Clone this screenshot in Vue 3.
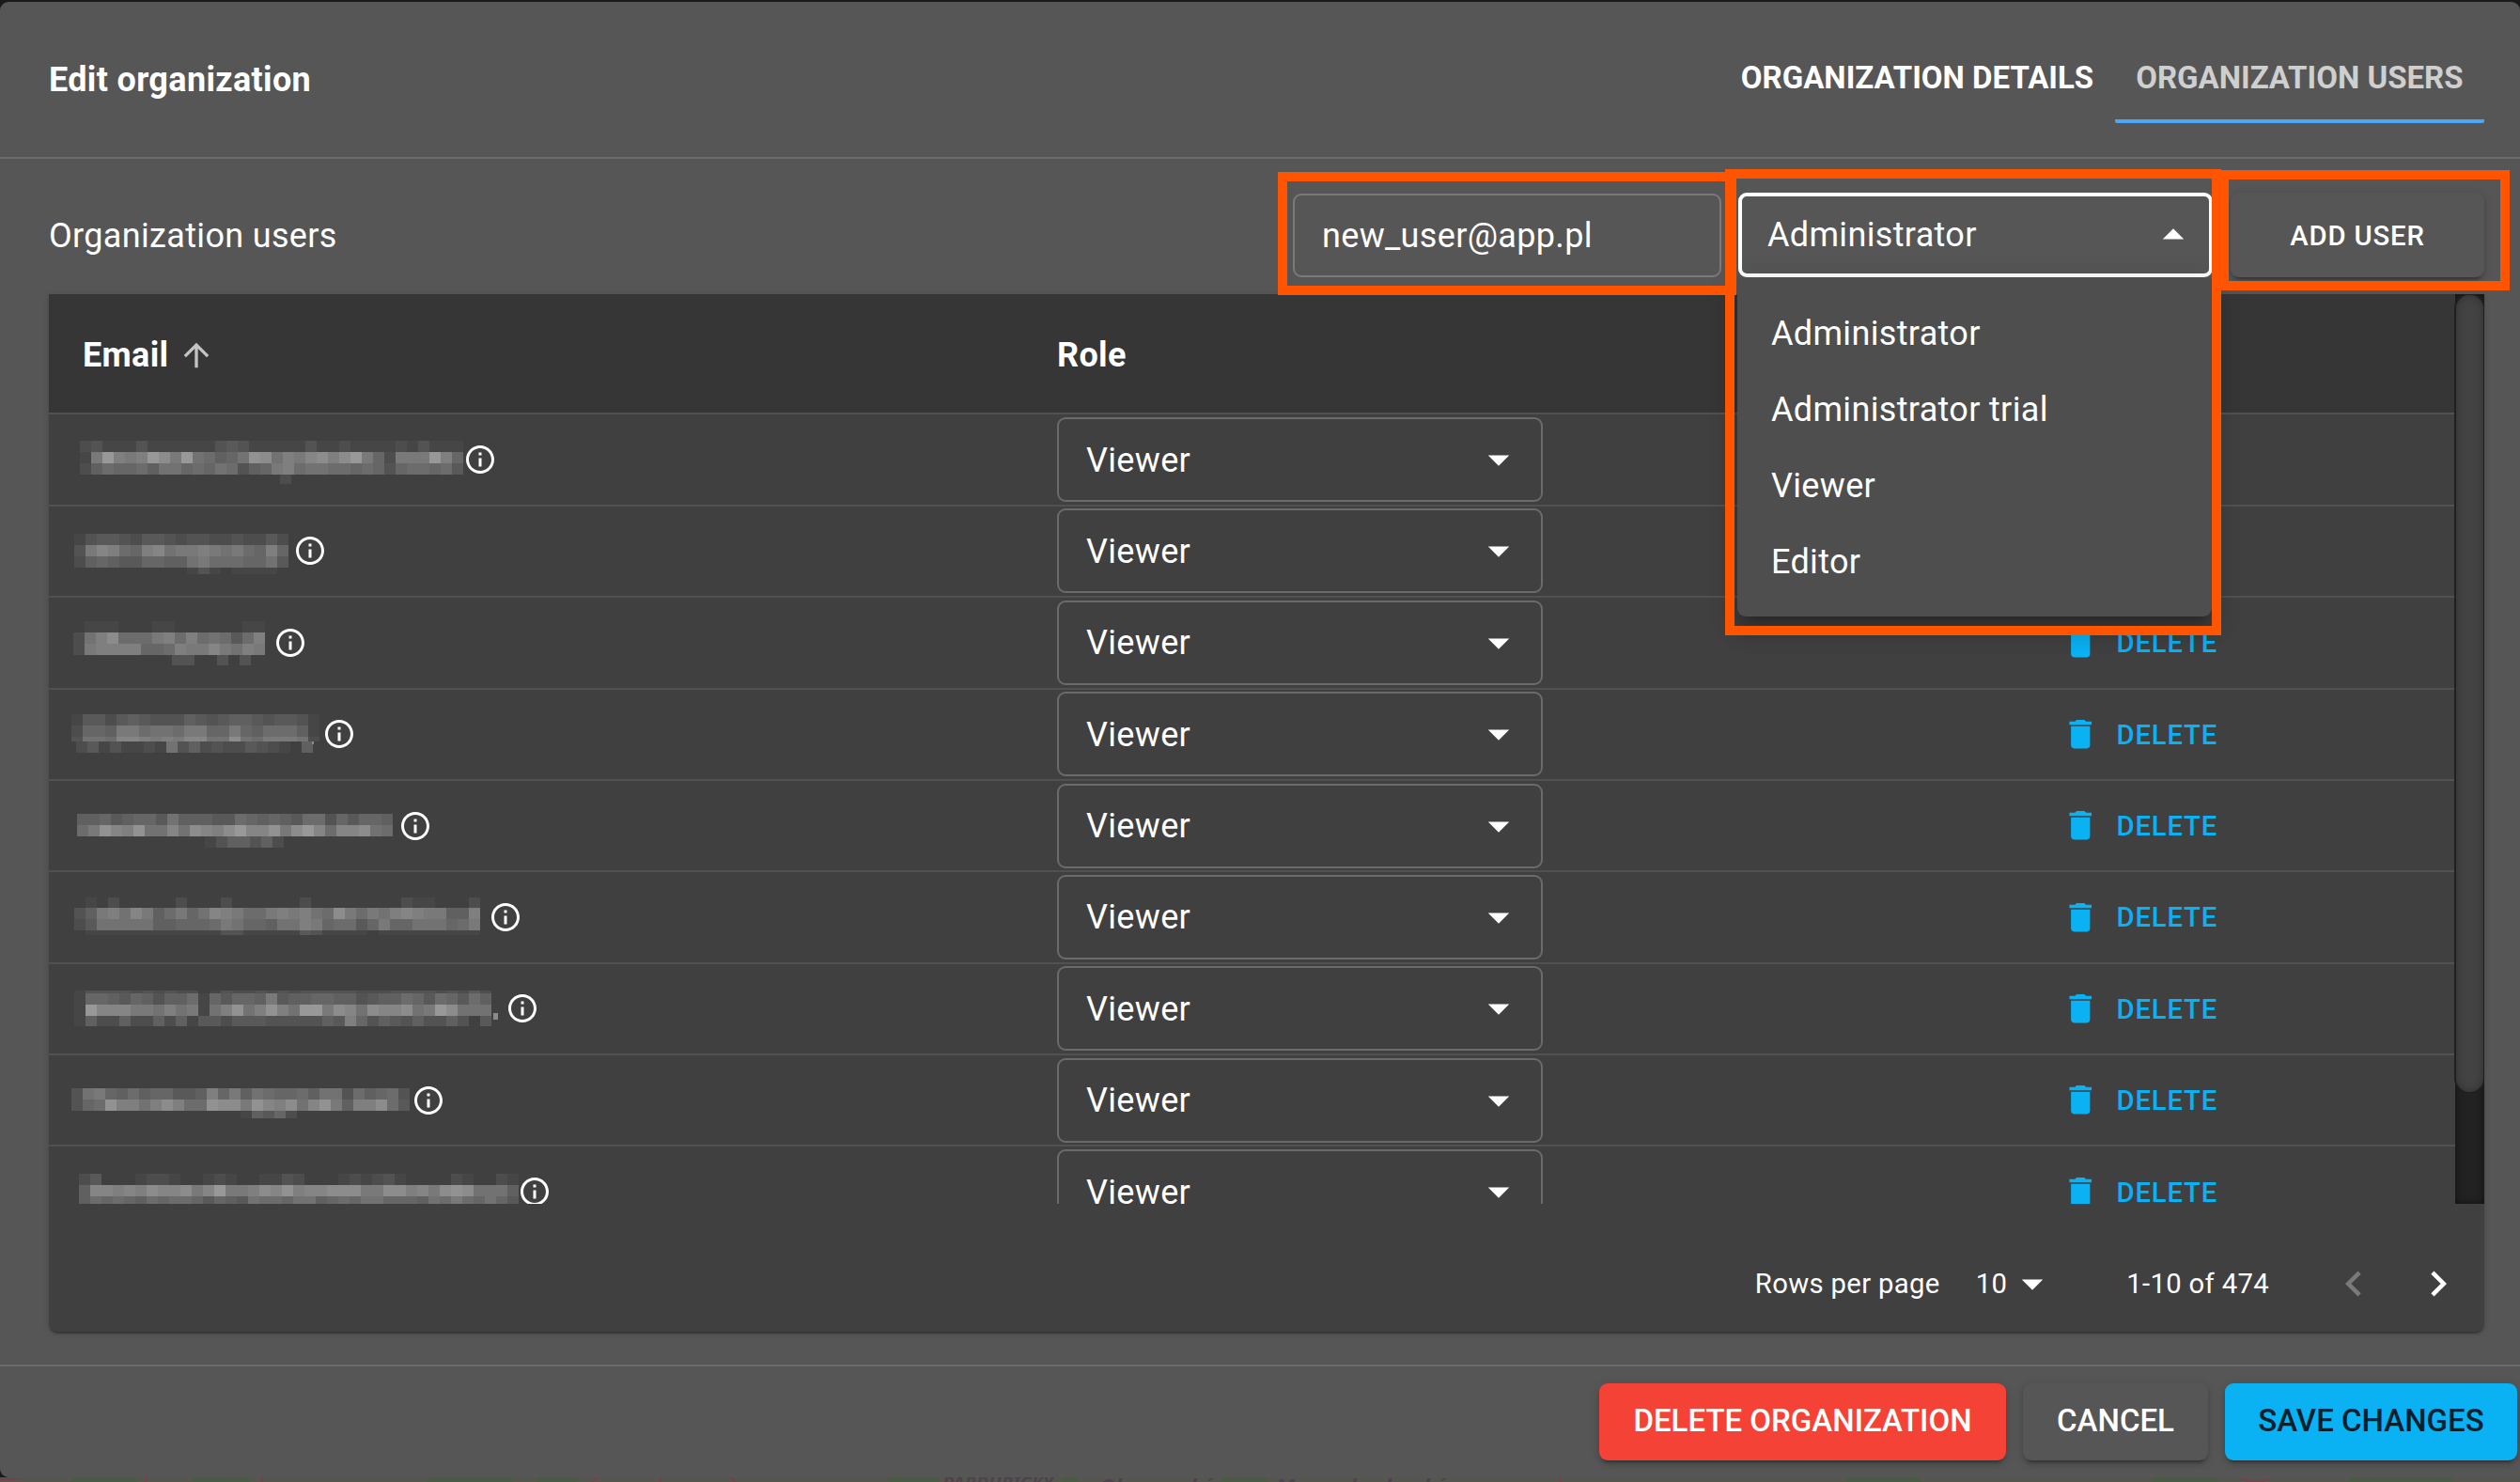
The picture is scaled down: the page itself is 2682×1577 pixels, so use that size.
<template>
  <div class="backdrop">
    <div class="dialog">
      <header class="dialog-header">
        <h2>Edit organization</h2>
        <nav class="tabs">
          <button class="tab">Organization details</button>
          <button class="tab active">Organization users</button>
        </nav>
      </header>

      <main class="content">
        <div class="toolbar">
          <span class="subtitle">Organization users</span>
          <div class="field">{{ newEmail }}</div>
          <div class="role-select">
            <span>Administrator</span>
            <svg class="caret" viewBox="0 0 24 24"><path d="M7 14l5-5 5 5z" /></svg>
            <ul class="menu">
              <li v-for="role in roles" :key="role">{{ role }}</li>
            </ul>
          </div>
          <button class="btn add">Add user</button>
          <i class="mark mark-email"></i>
          <i class="mark mark-role"></i>
          <i class="mark mark-add"></i>
        </div>

        <section class="card">
          <div class="scroller">
            <div class="table">
              <div class="row head">
                <div class="email">
                  Email
                  <svg class="sort" viewBox="0 0 24 24"><path d="M4 12l1.41 1.41L11 7.83V20h2V7.83l5.58 5.59L20 12l-8-8-8 8z" /></svg>
                </div>
                <div class="role">Role</div>
              </div>
              <div v-for="(user, i) in users" :key="i" class="row">
                <div class="email">
                  <!-- masked address -->
                  <svg class="mask" :style="{ width: user.width + 'px' }" shape-rendering="crispEdges">
                    <rect v-for="(c, k) in cells(user)" :key="k" :x="c.x" :y="c.y" :width="c.w" :height="c.h" :fill="c.fill" />
                  </svg>
                  <svg class="info" viewBox="0 0 24 24"><path d="M11 7h2v2h-2zm0 4h2v6h-2zm1-9C6.48 2 2 6.48 2 12s4.48 10 10 10 10-4.48 10-10S17.52 2 12 2zm0 18c-4.41 0-8-3.59-8-8s3.59-8 8-8 8 3.59 8 8-3.59 8-8 8z" /></svg>
                </div>
                <div class="role">
                  <div class="select">
                    <span>Viewer</span>
                    <svg class="caret" viewBox="0 0 24 24"><path d="M7 10l5 5 5-5z" /></svg>
                  </div>
                </div>
                <div class="action">
                  <svg class="trash" viewBox="0 0 24 24"><path d="M6 19c0 1.1.9 2 2 2h8c1.1 0 2-.9 2-2V7H6v12zM19 4h-3.5l-1-1h-5l-1 1H5v2h14V4z" /></svg>
                  <span>Delete</span>
                </div>
              </div>
            </div>
            <div class="track"><div class="thumb"></div></div>
          </div>
          <div class="pagination">
            <span class="per-page">Rows per page</span>
            <span class="count">10</span>
            <svg class="caret" viewBox="0 0 24 24"><path d="M7 10l5 5 5-5z" /></svg>
            <span class="range">1-10 of 474</span>
            <svg class="chev off" viewBox="0 0 24 24"><path d="M15.41 16.59L10.83 12l4.58-4.59L14 6l-6 6 6 6z" /></svg>
            <svg class="chev" viewBox="0 0 24 24"><path d="M8.59 16.59L13.17 12 8.59 7.41 10 6l6 6-6 6z" /></svg>
          </div>
        </section>
      </main>

      <footer class="dialog-footer">
        <button class="btn danger">Delete organization</button>
        <button class="btn cancel">Cancel</button>
        <button class="btn primary">Save changes</button>
      </footer>
    </div>
    <!-- sliver of the map under the dialog -->
    <svg class="map" viewBox="0 0 2682 5">
      <rect width="2682" height="5" fill="#55564f" />
      <g fill="#4b5a45">
        <rect x="75" width="70" height="5" />
        <rect x="205" width="60" height="5" />
        <rect x="455" width="90" height="5" />
        <rect x="570" width="45" height="5" />
        <rect x="945" width="55" height="5" />
        <rect x="1130" width="18" height="5" />
        <rect x="1300" width="50" height="5" />
        <rect x="1965" width="80" height="5" />
        <rect x="2290" width="70" height="5" />
        <rect x="2500" width="110" height="5" />
      </g>
      <path d="M0 2h22M155 0v5M279 0v5M637 0l-8 5M703 0v5M777 0l6 5M1661 0v5M2385 2q15 5 30 0" stroke="#76404d" stroke-width="2" fill="none" />
      <g class="map-label">
        <text x="1003" y="14" textLength="118" lengthAdjust="spacingAndGlyphs">PARDUBICKÝ</text>
        <text x="1170" y="17" textLength="122" lengthAdjust="spacingAndGlyphs">Olomoucký</text>
        <text x="1358" y="17" textLength="182" lengthAdjust="spacingAndGlyphs">Moravskoslezský</text>
      </g>
    </svg>
  </div>
</template>

<script setup>
const newEmail = 'new_user@app.pl'
const roles = ['Administrator', 'Administrator trial', 'Viewer', 'Editor']

// lines: [height, brightness per 12px cell (hex), optional x shift]
const users = [
  { width: 403, x: -5, y: 27, lines: [
    [12, '2311131111113431111131121111213111'],
    [12, '19ea9aec9e87568dc8a9bcace962999ea6'],
    [12, '257667588676873569a788776763677674'],
    [10, '0000000000000000002000000000000000', -3],
  ] },
  { width: 222, x: -11, y: 29, lines: [
    [12, '1344324432332232242'],
    [12, '39ba76ab899a98976a6'],
    [12, '2565446655897776684'],
    [7, '0000000000131011110'],
  ] },
  { width: 201, x: -12, y: 25, lines: [
    [12, '011100011000000110'],
    [12, '28ac7779a7a78747a0'],
    [12, '29aaaa667a99b98a90'],
    [11, '000000000330030300', -3],
  ] },
  { width: 253, x: -14, y: 26, lines: [
    [12, '1442454333543455434431'],
    [12, '2665997887996696577751'],
    [5, '3887bba9a9bb88c8799982'],
    [12, '241311218352322432105', 5],
  ], dot: [242, 55, 2, 3] },
  { width: 334, x: -8, y: 35, lines: [
    [12, '5564566485554476565477364665'],
    [12, '79dbad88b8cbacebbd9ceb7bbc87'],
    [12, '0000000000013553520000000000', 4],
  ] },
  { width: 430, x: -11, y: 27, lines: [
    [11, '010200000200020000002000000002110002'],
    [12, '359a8b957968ba9779a9a87c9798aba9955a'],
    [12, '24888885566679866588a967746966888679'],
    [5, '011111111111133111114311110111111111'],
  ] },
  { width: 448, x: -11, y: 28, lines: [
    [3, '1333323232201322323233333222333323242'],
    [12, '1665465355716466594556655345576476475'],
    [12, '1ebbb998a8918ad8ada8ee9cb8cbbc89ec888'],
    [11, '152252252514424443333354a635435335304'],
  ], dot: [435, 52, 5, 7] },
  { width: 348, x: -14, y: 35, lines: [
    [12, '389657566445a69587667588375673'],
    [12, '367daa8aca77dcc9dbac8bd95aac74'],
    [8, '000000000000000154620000000000'],
  ] },
  { width: 461, x: -6, y: 28, lines: [
    [12, '240001221001210011320001212310000210021'],
    [12, '5bbabacbbc9be99acbdabbccc99ccab9cdc8885'],
    [12, '576765767764654877688567688666587976864'],
  ] },
]

function cells(user) {
  const out = []
  let y = user.y
  for (const [h, line, dx = 0] of user.lines) {
    for (let i = 0; i < line.length; i++) {
      const n = parseInt(line[i], 16)
      const v = Math.round(64 + n * 6.3)
      if (n) out.push({ x: user.x + dx + i * 12, y, w: 12, h, fill: `rgb(${v},${v},${v})` })
    }
    y += h
  }
  if (user.dot) {
    const [x, dy, w, h] = user.dot
    out.push({ x, y: dy, w, h, fill: '#8a8a8a' })
  }
  return out
}
</script>

<style>
body {
  background: #1a1a1a;
  overflow: hidden;
}
</style>

<style scoped>
* {
  box-sizing: border-box;
}
.backdrop {
  width: 2682px;
  height: 1577px;
  padding-top: 2px;
  overflow: hidden;
  color: #fff;
  font: 400 36px/54px Roboto, sans-serif;
  letter-spacing: 0.00938em;
}
.dialog {
  height: 1570px;
  display: flex;
  flex-direction: column;
  background: #565656;
  border-radius: 9px 9px 0 9px;
}
svg {
  display: block;
  flex: none;
  fill: currentColor;
}
button {
  border: 0;
  background: none;
  color: inherit;
  font: inherit;
  text-transform: uppercase;
  white-space: nowrap;
}
.dialog-header {
  height: 167px;
  padding: 0 38px 0 52px;
  display: flex;
  align-items: flex-start;
  justify-content: space-between;
  border-bottom: 2px solid #6b6b6b;
}
h2 {
  margin: 56px 0 0;
  font-size: 36px;
  font-weight: 700;
}
.tabs {
  display: flex;
  padding-top: 34px;
}
.tab {
  height: 95px;
  padding: 3px 22.5px 0;
  font-size: 33px;
  font-weight: 700;
  letter-spacing: 0;
  border-bottom: 4px solid transparent;
}
.tab.active {
  color: #cfcfcf;
  border-color: #4ba6f5;
  border-radius: 2px;
}
.content {
  height: 1283px;
  padding: 0 38px 0 52px;
}
.toolbar {
  position: relative;
  height: 144px;
  padding-top: 36px;
  display: flex;
  align-items: flex-start;
}
.subtitle {
  flex: 1;
  margin-top: 19px;
}
.field {
  width: 456px;
  height: 89px;
  margin: 1px 18px 0 0;
  padding: 16px 29px;
  border: 2px solid #7a7a7a;
  border-radius: 9px;
}
.role-select {
  position: relative;
  z-index: 2;
  width: 505px;
  height: 90px;
  margin-right: 19px;
  padding: 0 11px 0 27px;
  display: flex;
  align-items: center;
  justify-content: space-between;
  border: 4px solid #fff;
  border-radius: 9px;
}
.caret {
  width: 54px;
  height: 54px;
}
.menu {
  position: absolute;
  top: 87px;
  left: -5px;
  width: 505px;
  margin: 0;
  padding: 18px 0;
  list-style: none;
  background: #4e4e4e;
  border-radius: 0 0 9px 9px;
  box-shadow: 0 11px 11px -7px rgba(0, 0, 0, 0.2), 0 18px 22px 2px rgba(0, 0, 0, 0.14), 0 7px 31px 4px rgba(0, 0, 0, 0.12);
}
.menu li {
  height: 81px;
  padding: 13.5px 36px;
}
.btn {
  padding: 0 36px;
  font-weight: 500;
  border-radius: 9px;
  background: #565656;
  box-shadow: 0 7px 2px -5px rgba(0, 0, 0, 0.2), 0 4px 4px rgba(0, 0, 0, 0.14), 0 2px 11px rgba(0, 0, 0, 0.12);
}
.add {
  width: 270px;
  height: 90px;
  padding-top: 2px;
  font-size: 29.25px;
  letter-spacing: 0.02857em;
}
.mark {
  position: absolute;
  z-index: 3;
  border: 10px solid #ff5500;
}
.mark-email {
  left: 1308px;
  top: 14px;
  width: 488px;
  height: 131px;
}
.mark-role {
  left: 1784px;
  top: 11px;
  width: 528px;
  height: 496px;
}
.mark-add {
  left: 2310px;
  top: 12px;
  width: 309px;
  height: 128px;
}
.card {
  height: 1104px;
  background: #404040;
  border-radius: 0 0 9px 9px;
  box-shadow: 0 4px 2px -2px rgba(0, 0, 0, 0.2), 0 2px 2px rgba(0, 0, 0, 0.14), 0 2px 7px rgba(0, 0, 0, 0.12);
}
.scroller {
  height: 968px;
  display: flex;
  overflow: hidden;
}
.table {
  width: 2561px;
}
.row {
  height: 97.375px;
  display: flex;
  align-items: center;
  border-bottom: 2px solid #515151;
}
.head {
  height: 128.4px;
  padding-top: 3px;
  background: #363636;
  font-weight: 700;
}
.email {
  width: 1073px;
  padding-left: 38px;
  display: flex;
  align-items: center;
}
.head .email {
  padding-left: 36px;
}
.sort {
  width: 40px;
  height: 40px;
  margin-left: 10px;
  color: #c3c3c3;
}
.mask {
  height: 95px;
  overflow: visible;
}
.info {
  width: 36px;
  height: 36px;
}
.role {
  width: 1066px;
}
.select {
  width: 517px;
  height: 90px;
  padding: 0 18px 0 29px;
  display: flex;
  align-items: center;
  justify-content: space-between;
  border: 2px solid #6b6b6b;
  border-radius: 9px;
}
.select span,
.action span {
  padding-top: 1px;
}
.action {
  display: flex;
  align-items: center;
  gap: 18px;
  padding-left: 3px;
  color: #0ab1f3;
  font-size: 29.25px;
  font-weight: 500;
  letter-spacing: 0.02857em;
  text-transform: uppercase;
}
.trash {
  width: 40.5px;
  height: 40.5px;
}
.track {
  width: 31px;
  background: #222;
  box-shadow: inset 0 0 8px #111;
}
.thumb {
  width: 33px;
  height: 852px;
  margin: -1px 0 0 -1px;
  background: #434343;
  border: 2px solid #202020;
  border-radius: 17px;
  box-shadow: inset 0 0 10px rgba(0, 0, 0, 0.3);
}
.pagination {
  height: 136px;
  padding: 34px 22px 0 0;
  display: flex;
  align-items: center;
  justify-content: flex-end;
  font-size: 29.25px;
}
.per-page {
  margin-right: 38px;
}
.range {
  margin: 0 63px 0 73px;
}
.chev {
  width: 54px;
  height: 54px;
}
.chev.off {
  margin-right: 36px;
  color: #7a7a7a;
}
.dialog-footer {
  flex: 1;
  display: flex;
  align-items: flex-start;
  justify-content: flex-end;
  gap: 18px;
  padding: 18px 3px 0 0;
  border-top: 2px solid #6b6b6b;
}
.dialog-footer .btn {
  height: 82px;
  padding: 0 0 2px;
  font-size: 33px;
  letter-spacing: 0;
}
.dialog-footer .danger {
  width: 433px;
  background: #f44336;
}
.dialog-footer .cancel {
  width: 197px;
}
.dialog-footer .primary {
  width: 311px;
  background: #0ab1f3;
  color: #06202c;
}
.map {
  width: 2682px;
  height: 5px;
}
.map-label {
  font: italic 700 22px "Noto Sans", sans-serif;
  fill: #4e434c;
  letter-spacing: 0;
}
</style>
